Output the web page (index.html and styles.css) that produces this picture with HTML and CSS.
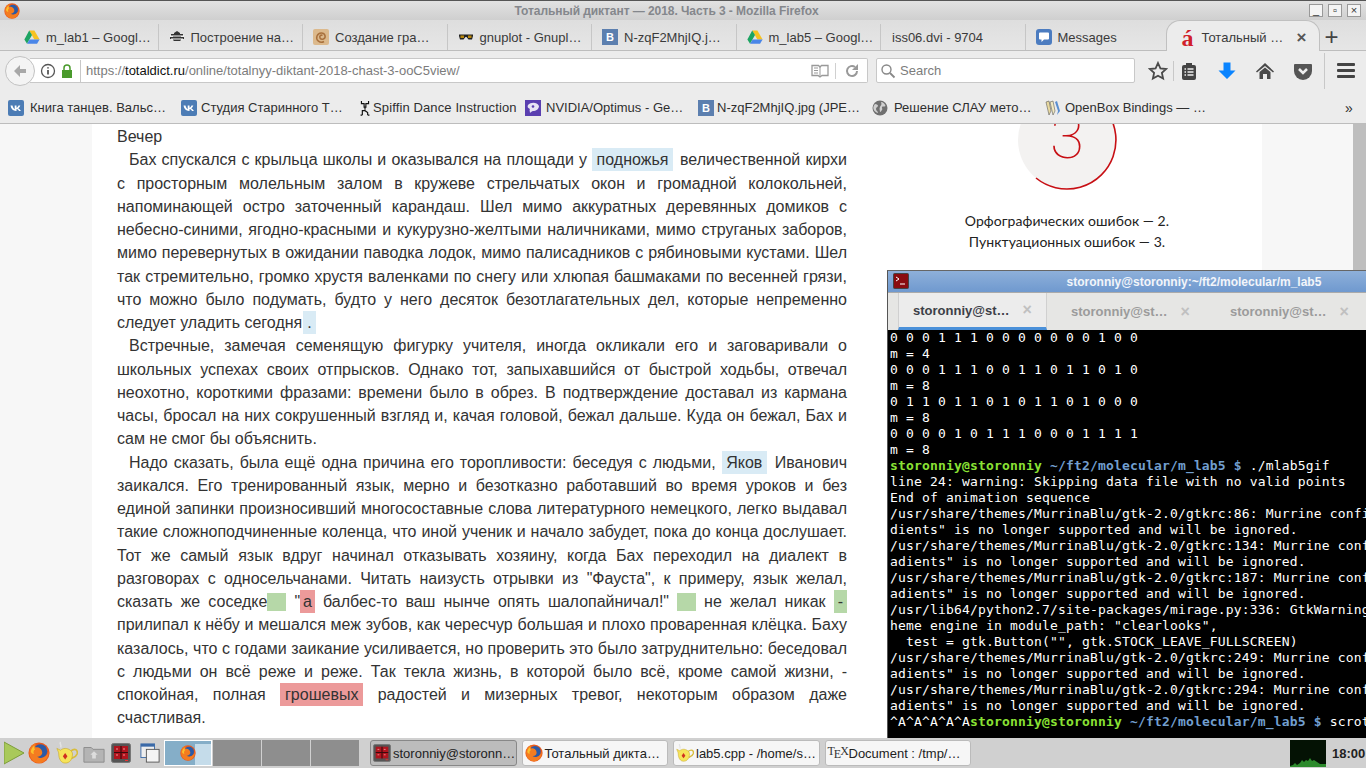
FILE: index.html
```html
<!DOCTYPE html>
<html lang="ru">
<head>
  <meta charset="UTF-8">
  <title>Тотальный диктант — 2018. Часть 3 - Mozilla Firefox</title>
  <link rel="stylesheet" href="styles.css">
</head>
<body>

<svg class="defs" xmlns="http://www.w3.org/2000/svg">
  <symbol id="firefox" viewBox="0 0 24 24">
    <circle cx="12" cy="12" r="11.5" fill="#e9591c"/>
    <circle cx="13.5" cy="10" r="7.5" fill="#2a5aa6"/>
    <path d="M2 8C3 4 6 1.500 9 1.500 7.500 3 7.500 5 8.500 6 11 5 15 7 15.500 11 16 14 13 16.500 10 16 12 18 16 18 19 15.500 21 14 22 12 22.500 10 23 17 18 23 12 23 5 23 0 16 2 8z" fill="#f47c20"/>
    <path d="M3 10C4 7 5 5 7 4 6.500 6 7 7.500 8 8 6 9 5.500 11 6.500 13 4.500 13 3.500 12 3 10z" fill="#fbc02d"/>
  </symbol>
  <symbol id="drive" viewBox="0 0 20 18">
    <path d="M6.500 1H13L19.500 12H13z" fill="#f7c221"/>
    <path d="M6.500 1L0.500 12 3.800 17.500 10 6.600z" fill="#1da462"/>
    <path d="M7 12H19.500L16.300 17.500H3.800z" fill="#4a86e8"/>
  </symbol>
  <symbol id="term" viewBox="0 0 20 20">
    <rect x="0.500" y="0.500" width="19" height="19" rx="2" fill="#555" stroke="#777"/>
    <rect x="3" y="3" width="14" height="13" fill="#b0141e"/>
    <path d="M3 9.500H17M10 3V16" stroke="#3a0a0d" stroke-width="1.200"/>
    <path d="M5 6h2M12 6h2M5 12h2M12 12h2" stroke="#f09090"/>
    <rect x="14" y="17" width="3" height="1" fill="#e33"/>
  </symbol>
  <symbol id="teapot" viewBox="0 0 24 24">
    <path d="M5 0C3 2 7 3 5 6" stroke="#e4e4e4" stroke-width="1.600" fill="none"/>
    <path d="M16 10C21 6 24 9 23 13 22 16 19 17 17 18" stroke="#d8bd3c" stroke-width="1.800" fill="none"/>
    <path d="M1 7C2 10 3 11 3 13 3 19 6 23 10 23 15 23 18 19 18 13 18 10 14 7 10 7 8 7 6 8 5 9z" fill="#f6e45a" stroke="#c9a92a" stroke-width=".7"/>
    <path d="M10 12l2.500 3.500-2.500 3.500-2.500-3.500z" fill="#d03020"/>
  </symbol>
  <symbol id="vk" viewBox="0 0 16 16">
    <rect width="16" height="16" rx="2" fill="#4c7cb5"/>
    <path d="M2.500 5.500H4.500C5 7.500 6 9 6.700 9.200V5.500H8.500V7.700C9.300 7.600 10 6.600 10.500 5.500H12.300C12 6.700 11 7.800 10.300 8.300 11 8.700 12.200 9.700 12.900 11H11C10.500 10 9.500 9.200 8.500 9.100V11H8C5 11 3 8.800 2.500 5.500z" fill="#fff"/>
  </symbol>
</svg>

<div class="titlebar">
  <svg class="title-icon"><use href="#firefox"/></svg>
  <span class="title-text">Тотальный диктант — 2018. Часть 3 - Mozilla Firefox</span>
  <div class="win-btns">
    <span class="win-btn">_</span>
    <span class="win-btn">▫</span>
    <span class="win-btn">×</span>
  </div>
</div>

<div class="tabs">
  <div class="tab">
    <svg class="fav"><use href="#drive"/></svg>m_lab1 – Googl…
  </div>
  <div class="tab">
    <svg class="fav" viewBox="0 0 16 16"><path d="M8 2l3 2v1h3v2h-2v1h3v2h-3v1l-1 1H5l-1-1v-1H1V8h3V7H2V5h3V4z" fill="#333"/><path d="M1 7h14M2 10h12" stroke="#fff"/></svg>Построение на…
  </div>
  <div class="tab">
    <svg class="fav" viewBox="0 0 16 16"><rect width="16" height="16" rx="2" fill="#dcb98c"/><path d="M11 12.500C7 15 2.500 11 4 7 5.500 3 11 3 12 6.500 13 10 8.500 11.500 7 9 6 7 8 5.500 9.500 6.500" fill="none" stroke="#a9713d" stroke-width="1.500"/></svg>Создание гра…
  </div>
  <div class="tab">
    <svg class="fav" viewBox="0 0 16 16"><path d="M1 5.500h14v1.500l-1 3.500h-3.500L8.500 8h-1l-2 2.500H2L1 7z" fill="#222"/><rect x="2.500" y="6.500" width="3.500" height="2.500" fill="#b8860b"/><rect x="10" y="6.500" width="3.500" height="2.500" fill="#b8860b"/></svg>gnuplot - Gnupl…
  </div>
  <div class="tab">
    <span class="fav blue-b">B</span>N-zqF2MhjIQ.j…
  </div>
  <div class="tab">
    <svg class="fav"><use href="#drive"/></svg>m_lab5 – Googl…
  </div>
  <div class="tab tab-plain">iss06.dvi - 9704</div>
  <div class="tab tab-msg">
    <svg class="fav" viewBox="0 0 16 16"><rect width="16" height="16" rx="3" fill="#4c7cc0"/><path d="M4 3.500h8a1 1 0 0 1 1 1v5a1 1 0 0 1-1 1H8L5.500 13v-2.500H4a1 1 0 0 1-1-1v-5a1 1 0 0 1 1-1z" fill="#fff"/></svg>Messages
  </div>
  <div class="tab-active">
    <span class="fav red-a">á</span>
    <span class="tab-active-text">Тотальный …</span>
    <span class="tab-close">×</span>
  </div>
  <span class="tab-new">+</span>
</div>

<div class="nav">
  <div class="back">
    <svg viewBox="0 0 16 16" width="16" height="16"><path d="M8 2L2 8l6 6V10h6V6H8z" fill="#a8a8a8"/></svg>
  </div>
  <div class="urlbar">
    <svg class="info" viewBox="0 0 16 16" width="16" height="16"><circle cx="8" cy="8" r="6.500" fill="none" stroke="#555" stroke-width="1.300"/><path d="M8 7v4.500M8 4.200v1.400" stroke="#444" stroke-width="1.600"/></svg>
    <svg class="lock" viewBox="0 0 12 14" width="12" height="14"><rect x="1" y="6" width="10" height="8" fill="#4a9a2c"/><path d="M3 6.500V4a3 3 0 0 1 6 0v2.500" fill="none" stroke="#4a9a2c" stroke-width="1.500"/></svg>
    <span class="url"><span class="url-dim">https://</span>totaldict.ru<span class="url-dim">/online/totalnyy-diktant-2018-chast-3-ooC5view/</span></span>
    <svg class="reader" viewBox="0 0 18 14" width="18" height="14"><path d="M1 1.500h6.500L9 3l1.500-1.500H17v10h-6L9 13l-2-1.500H1z" fill="#fff" stroke="#999" stroke-width="1.300"/><path d="M3 4h4M3 6.500h4M3 9h4" stroke="#999"/><path d="M9 3v10" stroke="#999"/></svg>
    <svg class="reload" viewBox="0 0 16 16" width="16" height="16"><path d="M13 8a5 5 0 1 1-2-4" fill="none" stroke="#999" stroke-width="2"/><path d="M14 1v6H8z" fill="#999"/></svg>
  </div>
  <div class="search">
    <svg viewBox="0 0 16 16" width="16" height="16"><circle cx="6.500" cy="6.500" r="4.500" fill="none" stroke="#888" stroke-width="1.400"/><path d="M10 10l4.500 4.500" stroke="#888" stroke-width="1.800"/></svg>
    <span>Search</span>
  </div>
  <svg class="tool star" viewBox="0 0 20 20"><path d="M10 2l2.400 5.400 5.800.6-4.300 3.900 1.200 5.700L10 14.700l-5.100 2.900 1.200-5.700L1.800 8l5.800-.6z" fill="none" stroke="#4a4a4a" stroke-width="1.800"/></svg>
  <span class="tool-sep"></span>
  <div class="tools">
    <svg class="tool" viewBox="0 0 20 20"><rect x="3" y="4" width="14" height="15" rx="2" fill="#444"/><rect x="7" y="2" width="6" height="4" fill="#444"/><path d="M5.500 8h1.500M8.500 8h6M5.500 11h1.500M8.500 11h6M5.500 14h1.500M8.500 14h6" stroke="#eee" stroke-width="1.300"/></svg>
    <svg class="tool" viewBox="0 0 20 20"><path d="M6.500 1.500h7v8h5L10 18 1.500 9.500h5z" fill="#0a84ff"/></svg>
    <svg class="tool" viewBox="0 0 20 20"><path d="M10 2L1 10.500l1 1 1.500-1.200L10 5l6.500 5.300 1.500 1.200 1-1z" fill="#4a4a4a"/><path d="M4.500 11L10 6.500l5.500 4.500v7H12v-5H8v5H4.500z" fill="#4a4a4a"/></svg>
    <svg class="tool" viewBox="0 0 20 20"><path d="M2 3h16a1 1 0 0 1 1 1v6a9 9 0 0 1-18 0V4a1 1 0 0 1 1-1z" fill="#555"/><path d="M6 8l4 4 4-4" fill="none" stroke="#eee" stroke-width="2.500"/></svg>
  </div>
  <span class="tool-sep sep-tall"></span>
  <div class="burger"><i></i><i></i><i></i></div>
</div>

<div class="bookmarks">
  <div class="bm"><svg class="fav"><use href="#vk"/></svg>Книга танцев. Вальс…</div>
  <div class="bm bm-b"><svg class="fav"><use href="#vk"/></svg>Студия Старинного Т…</div>
  <div class="bm bm-c">
    <svg class="fav" viewBox="0 0 12 18"><path d="M2 1v3h3v4h2V4h3V1M6 8v3M3 17v-5h3l3 2v3M3 17H1M9 17h2" fill="none" stroke="#111" stroke-width="1.300"/></svg>Spiffin Dance Instruction
  </div>
  <div class="bm bm-d">
    <svg class="fav" viewBox="0 0 16 16"><rect width="16" height="16" fill="#5a3fb0"/><path d="M3 5c3-3 9-3 11 1 0 3-3 5-6 5-1 0-2 1-3 2 0-2-1-3 0-4-2-1-3-2-2-4z" fill="#e8e4f4"/><circle cx="8" cy="6.500" r="1.300" fill="#5a3fb0"/></svg>NVIDIA/Optimus - Ge…
  </div>
  <div class="bm bm-e"><span class="fav blue-b">B</span>N-zqF2MhjIQ.jpg (JPE…</div>
  <div class="bm bm-f">
    <svg class="fav" viewBox="0 0 16 16"><circle cx="8" cy="8" r="7.500" fill="#707070"/><path d="M3 4c2 0 3 1 3 2s-2 1-2 3 2 2 2 4c-2-.5-4-2-4.500-4C1 7 2 5 3 4zM9 2c2 0 4 2 4.500 4-1 1-3 0-3.500 1s1 2 0 3-1 2-2 2c0-2-1-3 0-5s2-2 1-5z" fill="#d0d0d0"/></svg>Решение СЛАУ мето…
  </div>
  <div class="bm bm-g">
    <svg class="fav" viewBox="0 0 16 16"><path d="M1 2l3-1 2 10-2 4z" fill="#e8d9a0" stroke="#444" stroke-width=".5"/><path d="M5 2l3-1 2 10-2 4z" fill="#f0e8c0" stroke="#444" stroke-width=".5"/><path d="M10 2l2-1 3 10-3 4 1-4z" fill="#5a8fd0"/></svg>OpenBox Bindings — …
  </div>
  <span class="bm-more">»</span>
</div>

<div class="page">
  <div class="page-side"></div>
  <div class="content">
    <div class="article">
      <p class="first">Вечер</p>
      <p>Бах спускался с крыльца школы и оказывался на площади у <span class="note">подножья</span> величественной кирхи с просторным молельным залом в кружеве стрельчатых окон и громадной колокольней, напоминающей остро заточенный карандаш. Шел мимо аккуратных деревянных домиков с небесно-синими, ягодно-красными и кукурузно-желтыми наличниками, мимо струганых заборов, мимо перевернутых в ожидании паводка лодок, мимо палисадников с рябиновыми кустами. Шел так стремительно, громко хрустя валенками по снегу или хлюпая башмаками по весенней грязи, что можно было подумать, будто у него десяток безотлагательных дел, которые непременно следует уладить сегодня<span class="note note-dot">.</span></p>
      <p>Встречные, замечая семенящую фигурку учителя, иногда окликали его и заговаривали о школьных успехах своих отпрысков. Однако тот, запыхавшийся от быстрой ходьбы, отвечал неохотно, короткими фразами: времени было в обрез. В подтверждение доставал из кармана часы, бросал на них сокрушенный взгляд и, качая головой, бежал дальше. Куда он бежал, Бах и сам не смог бы объяснить.</p>
      <p>Надо сказать, была ещё одна причина его торопливости: беседуя с людьми, <span class="note">Яков</span> Иванович заикался. Его тренированный язык, мерно и безотказно работавший во время уроков и без единой запинки произносивший многосоставные слова литературного немецкого, легко выдавал такие сложноподчиненные коленца, что иной ученик и начало забудет, пока до конца дослушает. Тот же самый язык вдруг начинал отказывать хозяину, когда Бах переходил на диалект в разговорах с односельчанами. Читать наизусть отрывки из "Фауста", к примеру, язык желал, сказать же соседке<span class="punct"></span> "<span class="err err-a">а</span> балбес-то ваш нынче опять шалопайничал!" <span class="punct"></span> не желал никак <span class="punct-text">-</span> прилипал к нёбу и мешался меж зубов, как чересчур большая и плохо проваренная клёцка. Баху казалось, что с годами заикание усиливается, но проверить это было затруднительно: беседовал с людьми он всё реже и реже. Так текла жизнь, в которой было всё, кроме самой жизни, - спокойная, полная <span class="err">грошевых</span> радостей и мизерных тревог, некоторым образом даже счастливая.</p>
    </div>
    <div class="aside">
      <svg class="score" viewBox="0 0 100 100" width="100" height="100">
        <circle cx="50" cy="50" r="49" fill="#f3f2f1"/>
        <path d="M50 1A49 49 0 1 1 19 88" fill="none" stroke="#c70f14" stroke-width="1.600"/>
        <text x="50" y="68" class="score-num">3</text>
      </svg>
      <p>Орфографических ошибок — 2.</p>
      <p>Пунктуационных ошибок — 3.</p>
    </div>
  </div>
  <div class="page-side page-side-r"></div>
  <div class="scroll"></div>
</div>

<div class="terminal">
  <div class="term-title">
    <svg class="term-icon" viewBox="0 0 16 16"><rect x=".5" y=".5" width="15" height="15" rx="1" fill="#8a0c10" stroke="#444"/><path d="M3 4l3 2-3 2M7 11h5" fill="none" stroke="#fff"/></svg>
    <span>storonniy@storonniy:~/ft2/molecular/m_lab5</span>
  </div>
  <div class="term-tabs">
    <div class="term-tab term-tab-on"><span>storonniy@st…</span><b>×</b></div>
    <div class="term-tab"><span>storonniy@st…</span><b>×</b></div>
    <div class="term-tab"><span>storonniy@st…</span><b>×</b></div>
  </div>
  <pre class="term-out">0 0 0 1 1 1 0 0 0 0 0 0 0 1 0 0
m = 4
0 0 0 1 1 1 0 0 1 1 0 1 1 0 1 0
m = 8
0 1 1 0 1 1 0 1 0 1 1 0 1 0 0 0
m = 8
0 0 0 0 1 0 1 1 1 0 0 0 1 1 1 1
m = 8
<b class="green">storonniy@storonniy</b> <b class="blue">~/ft2/molecular/m_lab5 $</b> ./mlab5gif
line 24: warning: Skipping data file with no valid points
End of animation sequence
/usr/share/themes/MurrinaBlu/gtk-2.0/gtkrc:86: Murrine configuration option "gra
dients" is no longer supported and will be ignored.
/usr/share/themes/MurrinaBlu/gtk-2.0/gtkrc:134: Murrine configuration option "gr
adients" is no longer supported and will be ignored.
/usr/share/themes/MurrinaBlu/gtk-2.0/gtkrc:187: Murrine configuration option "gr
adients" is no longer supported and will be ignored.
/usr/lib64/python2.7/site-packages/mirage.py:336: GtkWarning: Unable to locate t
heme engine in module_path: "clearlooks",
  test = gtk.Button("", gtk.STOCK_LEAVE_FULLSCREEN)
/usr/share/themes/MurrinaBlu/gtk-2.0/gtkrc:249: Murrine configuration option "gr
adients" is no longer supported and will be ignored.
/usr/share/themes/MurrinaBlu/gtk-2.0/gtkrc:294: Murrine configuration option "gr
adients" is no longer supported and will be ignored.
^A^A^A^A^A<b class="green">storonniy@storonniy</b> <b class="blue">~/ft2/molecular/m_lab5 $</b> scrot</pre>
</div>

<div class="taskbar">
  <svg class="launch launch-play" viewBox="0 0 20 22"><path d="M0 0L20 11 0 22z" fill="#a9c95a" stroke="#7d9c3a"/></svg>
  <svg class="launch"><use href="#firefox"/></svg>
  <svg class="launch launch-pot"><use href="#teapot"/></svg>
  <svg class="launch" viewBox="0 0 24 22"><path d="M1 5h8l2 2h12v14H1z" fill="#b4b4b4" stroke="#8a8a8a"/><path d="M12 9l-4 4h2v4h4v-4h2z" fill="#ddd"/></svg>
  <svg class="launch launch-term"><use href="#term"/></svg>
  <svg class="launch launch-win" viewBox="0 0 22 22"><rect x="1" y="1" width="15" height="15" fill="#eee" stroke="#3b6aa8"/><rect x="1" y="1" width="15" height="3" fill="#3b6aa8"/><rect x="7" y="7" width="14" height="14" fill="#f4f4f4" stroke="#555"/></svg>
  <div class="pager">
    <div class="desk desk-on">
      <span class="desk-win"></span>
      <svg class="desk-ff"><use href="#firefox"/></svg>
    </div>
    <div class="desk"></div>
    <div class="desk"></div>
    <div class="desk"></div>
  </div>
  <div class="task task-on"><svg class="task-icon"><use href="#term"/></svg>storonniy@storonn…</div>
  <div class="task"><svg class="task-icon"><use href="#firefox"/></svg>Тотальный дикта…</div>
  <div class="task"><svg class="task-icon"><use href="#teapot"/></svg>lab5.cpp - /home/s…</div>
  <div class="task"><span class="tex">T<i>E</i>X</span>Document : /tmp/…</div>
  <svg class="graph" viewBox="0 0 36 27"><rect width="36" height="27" fill="#041204"/><path d="M0 27v-1l3-1 2-2 2 2 3-2 2-3 2 2 2-2 2 1 2-3 2 3 2-1 3 2 3 2 6 0v3z" fill="#2c8a2c"/></svg>
  <span class="clock">18:00</span>
</div>

</body>
</html>
```

FILE: styles.css
```css
* { box-sizing: border-box; margin: 0; padding: 0; }
html, body {
  width: 1366px;
  height: 768px;
  overflow: hidden;
}
body {
  position: relative;
  display: flex;
  flex-direction: column;
  font-family: "Liberation Sans", Arial, sans-serif;
  font-size: 13px;
  color: #3a3a3a;
  background: #ececec;
}
.defs { display: none; }

/* window title */
.titlebar {
  height: 20px;
  display: flex;
  align-items: center;
  padding-left: 4px;
  border-top: 1px solid #555;
  background: linear-gradient(#e2e2e2, #cfcfcf);
}
.title-icon { width: 16px; height: 16px; }
.title-text {
  flex: 1;
  text-align: center;
  font-size: 12px;
  font-weight: bold;
  letter-spacing: -0.06px;
  color: #84878c;
  padding-left: 4px;
}
.win-btns { display: flex; gap: 5px; padding-right: 5px; }
.win-btn {
  width: 14px;
  height: 13px;
  border: 1px solid #999;
  background: #f4f4f4;
  font-size: 11px;
  line-height: 10px;
  text-align: center;
  color: #333;
}

/* tabs */
.tabs {
  height: 31px;
  display: flex;
  align-items: flex-end;
  padding-left: 14px;
  border-bottom: 1px solid #bdbdbd;
  background: linear-gradient(#dedede, #e6e6e6);
  position: relative;
}
.tab {
  width: 144.5px;
  height: 26px;
  display: flex;
  align-items: center;
  gap: 6px;
  padding-left: 10px;
  border-right: 1px solid #c6c6c6;
  white-space: nowrap;
}
.tab-plain { padding-left: 11px; }
.tab-msg { border-right: none; width: 140px; }
.fav { width: 16px; height: 16px; flex: none; }
.blue-b {
  background: #5c7faf;
  color: #fff;
  font-weight: bold;
  font-size: 11px;
  line-height: 16px;
  text-align: center;
}
.tab-active {
  width: 154px;
  height: 31px;
  margin-bottom: -1px;
  display: flex;
  align-items: center;
  gap: 6px;
  padding: 3px 12px 0 13px;
  border: 1px solid #c0c0c0;
  border-bottom: none;
  border-radius: 14px 14px 0 0;
  background: #ececec;
  white-space: nowrap;
}
.red-a {
  font-family: "Liberation Serif", serif;
  font-size: 24px;
  font-weight: bold;
  color: #d0202a;
  line-height: 16px;
  text-align: center;
}
.tab-active-text { flex: 1; }
.tab-close { font-size: 17px; font-weight: bold; color: #555; }
.tab-new { margin-left: 5px; align-self: center; padding-top: 3px; font-size: 24px; color: #444; line-height: 24px; }

/* nav bar */
.nav {
  height: 39px;
  display: flex;
  align-items: center;
  padding-left: 5px;
  background: #ececec;
  border-bottom: 0;
}
.back {
  width: 30px;
  height: 30px;
  flex: none;
  margin-right: -5px;
  position: relative;
  border: 1px solid #c2c2c2;
  border-radius: 50%;
  background: #f4f4f4;
  display: flex;
  align-items: center;
  justify-content: center;
}
.urlbar {
  width: 838px;
  height: 25px;
  display: flex;
  align-items: center;
  padding-left: 10px;
  border: 1px solid #c8c8c8;
  border-left: none;
  border-radius: 0 2px 2px 0;
  background: #fff;
}
.info { flex: none; }
.lock { flex: none; margin-left: 5px; }
.url {
  flex: 1;
  margin-left: 7px;
  padding-left: 5px;
  border-left: 1px solid #c8c8c8;
  color: #111;
  font-size: 13px;
  line-height: 22px;
}
.url-dim { color: #7c7c7c; }
.reader { margin-right: 6px; }
.reload {
  box-sizing: content-box;
  margin-right: 7px;
  padding-left: 8px;
  border-left: 1px solid #d0d0d0;
}
.search {
  width: 259px;
  height: 25px;
  margin-left: 8px;
  display: flex;
  align-items: center;
  gap: 4px;
  padding-left: 3px;
  border: 1px solid #c8c8c8;
  border-radius: 2px;
  background: #fff;
  color: #7c7c7c;
}
.tool { width: 20px; height: 20px; flex: none; }
.star { margin-left: 13px; }
.tool-sep { width: 1px; height: 20px; background: #c8c8c8; margin-left: 5px; flex: none; }
.tools { display: flex; gap: 18px; margin-left: 5px; }
.sep-tall { height: 36px; margin-left: 11px; }
.burger { margin-left: 12px; width: 18px; display: flex; flex-direction: column; gap: 3px; }
.burger i { display: block; height: 3px; background: #444; border-radius: 1px; }

/* bookmarks */
.bookmarks {
  height: 34px;
  display: flex;
  align-items: center;
  padding: 2px 0 0 8px;
  border-bottom: 1px solid #bdbdbd;
  background: #ececec;
  color: #2f2f2f;
  white-space: nowrap;
}
.bm { width: 173px; display: flex; align-items: center; gap: 6px; flex: none; }
.bm-b { width: 176px; gap: 4px; }
.bm-c { width: 168px; gap: 0; letter-spacing: 0.12px; }
.bm-d { width: 173px; gap: 5px; }
.bm-e { width: 174px; gap: 3px; }
.bm-f { width: 173px; gap: 6px; }
.bm-g { width: 290px; gap: 4px; }
.bm-more { font-size: 14px; margin-left: 10px; }

/* page */
.page {
  flex: 1;
  display: flex;
  overflow: hidden;
  min-height: 0;
}
.page-side { width: 92px; background: #f7f7f7; flex: none; }
.page-side-r { width: 91px; }
.content {
  width: 1170px;
  flex: none;
  display: flex;
  gap: 25px;
  padding-left: 25px;
  background: #fff;
}
.article {
  width: 730px;
  flex: none;
  padding-top: 1px;
  font-size: 16px;
  line-height: 23.25px;
  color: #333;
  text-align: justify;
}
.article p { text-indent: 12px; }
.article p.first { text-indent: 0; }
.note { background: #d9ebf5; padding: 3px 4.5px; margin-right: 2px; }
.note-dot { padding: 3px 4px; margin-left: 1px; }
.err { background: #ec9a9a; padding: 3px 5px; }
.err-a { padding: 3px; }
.punct {
  display: inline-block;
  width: 19px;
  height: 18px;
  vertical-align: -4px;
  background: #b6d8a8;
}
.punct-text { background: #b6d8a8; padding: 3px 4px; }
.aside {
  width: 390px;
  flex: none;
  text-align: center;
  font-family: Lato, sans-serif;
  font-size: 14px;
  letter-spacing: 0.05px;
  line-height: 21px;
  color: #222;
}
.score { display: block; margin: -34px auto 20px; }
.score-num {
  font-family: Roboto, sans-serif;
  font-weight: 100;
  font-size: 62px;
  fill: #c70f14;
  text-anchor: middle;
}
.scroll { width: 13px; flex: none; background: #bebebe; }

/* terminal window */
.terminal {
  position: absolute;
  left: 887px;
  top: 270px;
  width: 479px;
  height: 468px;
  overflow: hidden;
  display: flex;
  flex-direction: column;
  border-left: 1px solid #555;
  border-top: 1px solid #666;
  background: #000;
}
.term-title {
  height: 21px;
  flex: none;
  display: flex;
  align-items: center;
  justify-content: center;
  padding-left: 134px;
  position: relative;
  background: linear-gradient(#8eb0da, #6f99cf);
  color: #f2f5fa;
  font-size: 12px;
  font-weight: bold;
}
.term-icon { position: absolute; left: 5px; top: 2px; width: 16px; height: 16px; }
.term-tabs {
  height: 38px;
  flex: none;
  display: flex;
  padding-left: 10px;
  background: #e6e6e4;
  border-top: 1px solid #aaa;
}
.term-tab {
  width: 159px;
  flex: none;
  display: flex;
  align-items: center;
  gap: 13px;
  padding-left: 14px;
  font-size: 13px;
  font-weight: bold;
  color: #9b9b9b;
}
.term-tab b { font-size: 16px; color: #c0c0c0; }
.term-tab-on {
  width: 149px;
  color: #3c4048;
  background: #ececec;
  border-left: 1px solid #d0d0d0;
  border-right: 1px solid #d0d0d0;
  border-bottom: 3px solid #4a90d9;
}
.term-tab-on + .term-tab { padding-left: 24px; }
.term-tab-on + .term-tab + .term-tab { padding-left: 24px; }
.term-out {
  flex: 1;
  overflow: hidden;
  padding-left: 2px;
  font-family: "DejaVu Sans Mono", monospace;
  font-size: 13px;
  letter-spacing: 0.17px;
  line-height: 16px;
  color: #fff;
}
.green { color: #8ae234; }
.blue { color: #729fcf; }

/* panel */
.taskbar {
  height: 30px;
  flex: none;
  display: flex;
  align-items: center;
  padding-left: 4px;
  background: #d0d0d0;
  color: #222;
}
.launch { width: 22px; height: 24px; flex: none; margin-right: 5px; }
.launch-play { width: 20px; margin-right: 4px; }
.launch-pot { margin-left: 1px; }
.launch-term { width: 20px; margin-left: 1px; }
.launch-win { width: 20px; margin-left: 4px; margin-right: 4px; }
.pager {
  display: flex;
  gap: 1px;
  margin-right: 11px;
  height: 26px;
}
.desk { width: 48px; background: #8e8e8e; position: relative; }
.desk-on { background: #85aec8; border: 1px solid #fff; }
.desk-ff { position: absolute; left: 15px; top: 3px; width: 16px; height: 18px; }
.desk-win { position: absolute; right: 0; bottom: 0; width: 16px; height: 21px; background: #c5dcea; }
.task {
  width: 146.500px;
  height: 26px;
  margin-right: 5px;
  flex: none;
  display: flex;
  align-items: center;
  gap: 2px;
  padding-left: 2px;
  border: 1px solid #bbb;
  border-radius: 3px;
  background: #f6f6f6;
  white-space: nowrap;
  overflow: hidden;
}
.task-on { background: #bcbcbc; border-color: #888; }
.task-icon { width: 18px; height: 18px; flex: none; }
.tex {
  width: 19px;
  flex: none;
  font-family: "Liberation Serif", serif;
  font-size: 12px;
  letter-spacing: -1px;
  color: #333;
}
.tex i { font-style: normal; vertical-align: -3px; }
.graph { width: 36px; height: 27px; margin-left: 314px; flex: none; }
.clock { margin-left: 6px; font-weight: bold; }
```
